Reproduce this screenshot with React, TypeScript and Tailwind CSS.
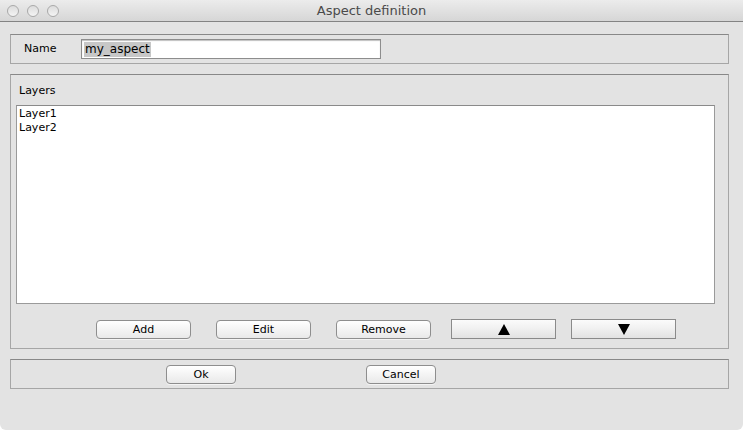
import React from 'react';

const font = { fontFamily: '"Lucida Grande", "DejaVu Sans", sans-serif' };

function MacButton({ label, className = '' }: { label: string; className?: string }) {
  return (
    <button
      className={`h-[19px] rounded-[4px] border border-[#8e8e8e] bg-gradient-to-b from-white to-[#e9e9e9] text-[11px] leading-none text-black shadow-[0_1px_0_rgba(255,255,255,0.6)] ${className}`}
    >
      {label}
    </button>
  );
}

function ArrowButton({ up }: { up?: boolean }) {
  return (
    <button className="flex h-[20px] w-[105px] items-center justify-center border border-[#8a8a8a] bg-gradient-to-b from-[#fbfbfb] via-[#f0f0f0] to-[#e2e2e2]">
      <svg width="12" height="11" viewBox="0 0 12 11">
        {up ? <path d="M6 0 L12 11 L0 11 Z" fill="#000" /> : <path d="M0 0 L12 0 L6 11 Z" fill="#000" />}
      </svg>
    </button>
  );
}

export default function App() {
  return (
    <div className="flex h-[430px] w-[743px] flex-col overflow-hidden rounded-b-[6px] bg-[#e3e3e3]" style={font}>
      {/* Title bar */}
      <div className="relative flex h-[22px] shrink-0 items-center justify-center border-b border-[#838383] bg-gradient-to-b from-[#ececec] to-[#d6d6d6]">
        <div className="absolute left-[7px] top-[5px] flex gap-[8px]">
          {[0, 1, 2].map((i) => (
            <div
              key={i}
              className="h-[12px] w-[12px] rounded-full border border-[#a9a9a9] bg-gradient-to-b from-[#dcdcdc] to-[#f4f4f4]"
            />
          ))}
        </div>
        <span className="text-[13px] text-[#4a4a4a]">Aspect definition</span>
      </div>

      <div className="flex flex-col pl-[10px] pr-[14px]">
        {/* Name */}
        <div className="mt-[12px] flex h-[30px] items-center border border-[#a6a6a6] border-t-[#888888] pl-[13px]">
          <span className="w-[57px] text-[11px] text-black">Name</span>
          <div className="flex h-[20px] w-[300px] items-center border border-[#8d8d8d] bg-white pl-[2px] shadow-[inset_0_1px_1px_rgba(0,0,0,0.25)]">
            <span className="bg-[#c7c7c7] px-[1px] text-[12px] leading-[15px] text-black">my_aspect</span>
          </div>
        </div>

        {/* Layers */}
        <div className="mt-[10px] flex h-[275px] flex-col border border-[#a6a6a6] border-t-[#888888] pl-[5px] pr-[13px]">
          <div className="mt-[8px] h-[22px] pl-[3px] text-[11px] text-black">Layers</div>
          <div className="h-[199px] border border-[#9a9a9a] border-t-[#8a8a8a] bg-white px-[2px] pt-[1px] text-[11px] leading-[14px] text-black">
            <div>Layer1</div>
            <div>Layer2</div>
          </div>
          <div className="mt-[15px] flex items-center pl-[80px]">
            <MacButton label="Add" className="w-[95px]" />
            <MacButton label="Edit" className="ml-[25px] w-[95px]" />
            <MacButton label="Remove" className="ml-[25px] w-[95px]" />
            <div className="ml-[20px]">
              <ArrowButton up />
            </div>
            <div className="ml-[15px]">
              <ArrowButton />
            </div>
          </div>
        </div>

        {/* Ok / Cancel */}
        <div className="mt-[10px] flex h-[30px] items-center border border-[#a6a6a6] border-t-[#888888] pl-[155px]">
          <MacButton label="Ok" className="w-[70px]" />
          <MacButton label="Cancel" className="ml-[130px] w-[70px]" />
        </div>
      </div>
    </div>
  );
}
